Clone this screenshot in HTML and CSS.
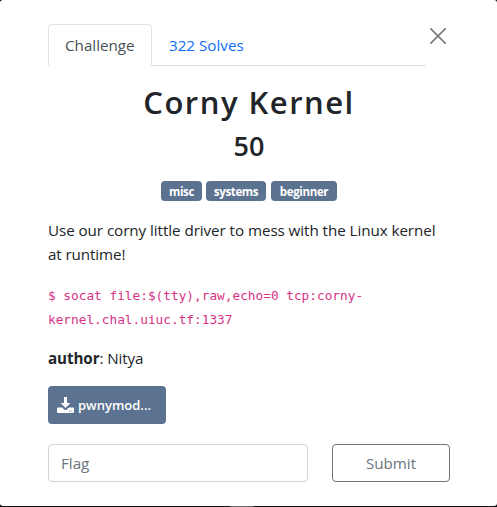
FILE: index.html
```html
<!DOCTYPE html>
<html lang="en">
<head>
<meta charset="utf-8">
<title>Corny Kernel</title>
<link rel="stylesheet" href="styles.css">
</head>
<body>
<main class="modal">
  <header class="modal-top">
    <nav class="tabs">
      <a class="tab active">Challenge</a>
      <a class="tab">322 Solves</a>
    </nav>
    <button class="close" aria-label="Close"><svg width="16" height="16" viewBox="0 0 16 16"><path d="M.3.3 15.7 15.7M15.7.3.3 15.7"/></svg></button>
  </header>
  <h2 class="name">Corny Kernel</h2>
  <h3 class="value">50</h3>
  <div class="tags">
    <span class="badge misc">misc</span>
    <span class="badge systems">systems</span>
    <span class="badge beginner">beginner</span>
  </div>
  <p class="text"><span class="line-one">Use our corny little driver to mess with the Linux kernel</span><br><span class="line-two">at runtime!</span></p>
  <p class="text"><code>$ socat file:$(tty),raw,echo=0 tcp:corny-<br>kernel.chal.uiuc.tf:1337</code></p>
  <p class="text author"><strong>author</strong><span>: Nitya</span></p>
  <a class="download">
    <svg width="17" height="16" viewBox="0 0 17 16"><path d="M7 0h3v6h3.300L8.500 11 3.700 6H7z"/><path fill-rule="evenodd" d="M1 10.500h4l2.200 2.100q1.300 1 2.600 0L12 10.500h4q1 0 1 1V15q0 1-1 1H1q-1 0-1-1v-3.500q0-1 1-1zM12 13.500h1v1h-1zM14.300 13.500h1v1h-1z"/></svg>
    <span>pwnymod...</span>
  </a>
  <div class="form">
    <input class="flag" type="text" placeholder="Flag" aria-label="Flag">
    <button class="submit">Submit</button>
  </div>
</main>
</body>
</html>
```
FILE: styles.css
```css
* { box-sizing: border-box; }
body {
  margin: 0;
  height: 507px;
  overflow: hidden;
  background: linear-gradient(90deg, #111 0 229px, #666 232px 252px, #111 255px);
  color: #212529;
  font: 15.2px/24px "Open Sans", "Noto Sans", sans-serif;
}
.modal {
  height: 506px;
  padding: 24px 47px 0 48px;
  background: #fff;
  border-radius: 3px;
}
.modal-top { display: flex; height: 42px; }
.tabs { display: flex; width: 378px; border-bottom: 1px solid #dee2e6; }
.tab {
  height: 42px;
  padding: 9px 16px 8px 17px;
  color: #0d6efd;
  white-space: nowrap;
}
.tab.active {
  width: 104px;
  padding-left: 16px;
  border: 1px solid #dee2e6;
  border-bottom-color: #fff;
  border-radius: 4px 4px 0 0;
  padding-top: 8px;
  color: #495057;
}
.close {
  display: block;
  width: 16px;
  height: 16px;
  margin: 4px 0 0 4px;
  padding: 0;
  border: 0;
  background: none;
}
.close svg { display: block; }
.close path { fill: none; stroke: #7f7f7f; stroke-width: 1.8; }
.name, .value { margin: 0; width: 402px; text-align: center; font-weight: 600; }
.name { margin-top: 17px; font-size: 31px; line-height: 38px; letter-spacing: 1.5px; }
.value { margin-top: 8px; font-size: 27px; line-height: 34px; }
.tags { display: flex; justify-content: center; gap: 4px; width: 402px; margin-top: 18px; }
.badge {
  height: 20px;
  border-radius: 4px;
  background: #5b7290;
  color: #fff;
  font-size: 11.5px;
  font-weight: 700;
  line-height: 21px;
  letter-spacing: -.35px;
  text-align: center;
}
.misc { width: 41px; }
.systems { width: 60px; margin-right: 1px; }
.beginner { width: 66px; }
.text { margin: 17px 0 16px; white-space: nowrap; }
.text + .text { margin-top: 0; }
.line-one { letter-spacing: -.06px; }
.line-two { letter-spacing: -.1px; }
code {
  display: block;
  padding-top: 2px;
  margin-bottom: -2px;
  color: #d63384;
  font: 12.77px/24px "DejaVu Sans Mono", monospace;
}
.author { padding-top: 0; letter-spacing: -.1px; }
.download {
  display: flex;
  align-items: center;
  gap: 4px;
  width: 118px;
  height: 38px;
  padding-left: 9px;
  border-radius: 4px;
  background: #5b7290;
  color: #fff;
  font-size: 13px;
  font-weight: 600;
  line-height: 40px;
}
.download svg { fill: #fff; }
.form { display: flex; gap: 24px; margin-top: 20px; }
.flag, .submit { height: 38px; border-radius: 4px; background: #fff; font: inherit; }
.flag { width: 260px; padding: 0 12px; border: 1px solid #ced4da; }
.flag::placeholder { color: #6c757d; opacity: 1; }
.submit { width: 118px; padding: 0; border: 1px solid #6c757d; color: #6c757d; }
```
